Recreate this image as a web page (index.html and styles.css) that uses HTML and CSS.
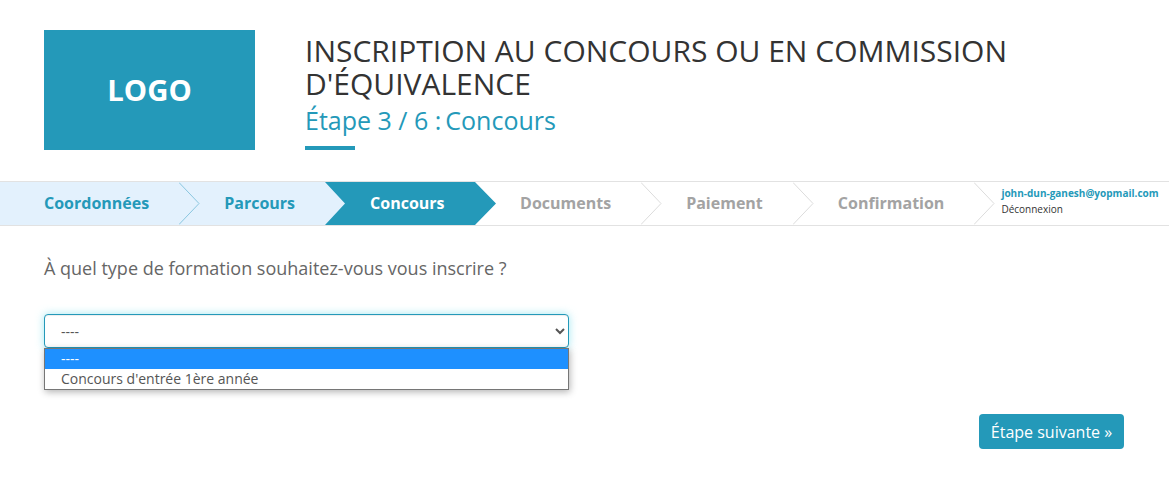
FILE: index.html
```html
<!DOCTYPE html>
<html lang="fr">
<head>
<meta charset="utf-8">
<title>Inscription</title>
<link rel="stylesheet" href="styles.css">
</head>
<body>
<header class="header">
  <div class="logo">LOGO</div>
  <div class="heading">
    <h1 class="title">INSCRIPTION AU CONCOURS OU EN COMMISSION D'ÉQUIVALENCE</h1>
    <h2 class="subtitle">Étape 3 / 6 :<span class="subtitle-name">Concours</span></h2>
    <div class="rule"></div>
  </div>
</header>
<nav class="steps">
  <a class="step step--done">Coordonnées
    <svg class="chevron" width="21" height="43" viewBox="0 0 21 43"><path d="M0 0.5 L20 21.5 L0 42.5" fill="none" stroke="#8ac6df"/></svg>
  </a>
  <a class="step step--done">Parcours</a>
  <a class="step step--active">
    <svg class="arrow" width="171" height="43" viewBox="0 0 171 43"><polygon points="0,0 150,0 171,21.5 150,43 0,43 20,21.5" fill="#2499b9"/></svg>
    <span class="step-label">Concours</span>
  </a>
  <a class="step step--todo">Documents
    <svg class="chevron" width="21" height="43" viewBox="0 0 21 43"><path d="M0 0.5 L20 21.5 L0 42.5" fill="none" stroke="#dcdcdc"/></svg>
  </a>
  <a class="step step--todo">Paiement
    <svg class="chevron" width="21" height="43" viewBox="0 0 21 43"><path d="M0 0.5 L20 21.5 L0 42.5" fill="none" stroke="#dcdcdc"/></svg>
  </a>
  <a class="step step--todo">Confirmation
    <svg class="chevron" width="21" height="43" viewBox="0 0 21 43"><path d="M0 0.5 L20 21.5 L0 42.5" fill="none" stroke="#dcdcdc"/></svg>
  </a>
  <div class="account">
    <a class="account-mail">john-dun-ganesh@yopmail.com</a>
    <a class="account-out">Déconnexion</a>
  </div>
</nav>
<main class="content">
  <p class="question">À quel type de formation souhaitez-vous vous inscrire ?</p>
  <div class="field">
    <select class="select">
      <option>----</option>
      <option>Concours d'entrée 1ère année</option>
    </select>
    <ul class="options">
      <li class="option option--selected">----</li>
      <li class="option">Concours d'entrée 1ère année</li>
    </ul>
  </div>
  <div class="actions">
    <button class="next" type="button">Étape suivante »</button>
  </div>
</main>
</body>
</html>
```
FILE: styles.css
```css
* { box-sizing: border-box; }
html, body { margin: 0; padding: 0; }
body {
  font-family: "Open Sans", sans-serif;
  color: #555;
  background: #fff;
  overflow: hidden;
}
.header {
  display: flex;
  gap: 50px;
  padding: 30px 44px 0;
  height: 181px;
}
.logo {
  width: 211px;
  height: 120px;
  background: #2499b9;
  color: #fff;
  font-size: 29.3px;
  font-weight: 700;
  display: flex;
  align-items: center;
  justify-content: center;
}
.heading { width: 780px; padding-top: 4px; }
.title {
  margin: 0;
  font-size: 30px;
  font-weight: 400;
  line-height: 33px;
  color: #333;
}
.subtitle {
  margin: 4px 0 0;
  font-size: 25px;
  font-weight: 400;
  line-height: 33px;
  color: #2499b9;
}
.subtitle-name { margin-left: 4px; }
.rule {
  width: 50px;
  height: 4px;
  margin-top: 9px;
  background: #2499b9;
}
.steps {
  display: flex;
  height: 45px;
  border-top: 1px solid #e2e2e2;
  border-bottom: 1px solid #e2e2e2;
}
.step {
  position: relative;
  display: flex;
  align-items: center;
  padding: 0 30px 2px 45px;
  font-size: 16px;
  font-weight: 700;
  white-space: nowrap;
}
.step:first-child { padding-left: 44px; }
.step--done { background: #e3f1fd; color: #2499b9; }
.step--todo { color: #a3a3a3; }
.step--active { background: #e3f1fd; color: #fff; width: 150px; }
.step-label { position: relative; }
.chevron { position: absolute; top: 0; left: 100%; z-index: 1; }
.arrow { position: absolute; top: 0; left: 0; }
.account {
  display: flex;
  flex-direction: column;
  justify-content: flex-start;
  gap: 3px;
  padding: 5px 0 0 27px;
  font-size: 10px;
  line-height: 13px;
}
.account-mail { color: #2499b9; font-weight: 700; }
.account-out { color: #333; }
.content { padding: 0 45px 0 44px; }
.question {
  margin: 0;
  padding-top: 30px;
  font-size: 18px;
  line-height: 24px;
  color: #666;
}
.field {
  position: relative;
  width: 525px;
  margin-top: 34px;
}
.select {
  display: block;
  width: 100%;
  height: 34px;
  padding: 0 12px;
  font-family: "Open Sans", sans-serif;
  font-size: 14px;
  color: #555;
  background-color: #fff;
  border: 1px solid #2499b9;
  border-radius: 4px;
  outline: none;
  box-shadow: inset 0 1px 1px rgba(0,0,0,.075), 0 0 8px rgba(102,217,233,.6);
}
.options {
  position: absolute;
  top: 34px;
  left: 0;
  width: 100%;
  margin: 0;
  padding: 0;
  list-style: none;
  background: #fff;
  border: 1px solid #767676;
  box-shadow: 1px 2px 7px rgba(0,0,0,.3);
  font-size: 14px;
  line-height: 20px;
}
.option { height: 20px; padding-left: 16px; color: #555; }
.option--selected { background: #1e90ff; color: #fff; }
.actions {
  display: flex;
  justify-content: flex-end;
  margin-top: 66px;
}
.next {
  height: 35px;
  width: 145px;
  padding: 0;
  font-family: "Open Sans", sans-serif;
  font-size: 16px;
  color: #fff;
  background: #2499b9;
  border: 0;
  border-radius: 4px;
}
```
